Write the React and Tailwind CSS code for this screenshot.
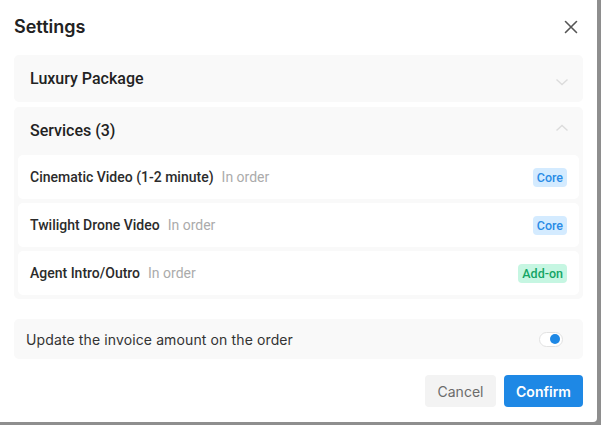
import React from "react";

function Badge({ kind }) {
  if (kind === "core")
    return (
      <span className="h-[19px] px-[4px] rounded-[4px] bg-[#d4ebff] text-[#2a8be6] text-[12.5px] leading-[19px] font-medium">
        Core
      </span>
    );
  return (
    <span className="h-[19px] px-[4px] rounded-[4px] bg-[#c6f6e2] text-[#14a565] text-[12.5px] leading-[19px] font-medium">
      Add-on
    </span>
  );
}

function Item({ name, badge }) {
  return (
    <div className="h-[44px] bg-white rounded-[5px] flex items-center pl-[12px] pr-[12px]">
      <span className="text-[14px] font-medium text-[#2b2b2b]">{name}</span>
      <span className="ml-[8px] text-[14px] text-[#ababab]">In order</span>
      <div className="ml-auto flex">
        <Badge kind={badge} />
      </div>
    </div>
  );
}

export default function App() {
  return (
    <div className="w-[601px] h-[425px] bg-[#8e8e8e] overflow-hidden" style={{ fontFamily: "Roboto, sans-serif" }}>
      <div className="w-[597px] h-[422px] bg-white rounded-br-[4px] px-[14px] flex flex-col">
        <div className="h-[55px] flex items-center justify-between pb-[2px]">
          <span className="text-[18px] font-semibold text-[#222]" style={{ fontFamily: "Inter, sans-serif" }}>
            Settings
          </span>
          <svg width="14" height="14" viewBox="0 0 14 14" className="mr-[5px]">
            <path d="M1.5 1.5 L12.5 12.5 M12.5 1.5 L1.5 12.5" stroke="#555" strokeWidth="1.6" strokeLinecap="round" />
          </svg>
        </div>
        <div className="h-[47px] bg-[#f9f9f9] rounded-[5px] flex items-center pl-[16px] pr-[14px]">
          <span className="text-[16px] font-medium text-[#222]">Luxury Package</span>
          <svg width="14" height="10" viewBox="0 0 14 10" className="ml-auto mt-[6px]">
            <path d="M1.5 2.5 L7 7.5 L12.5 2.5" fill="none" stroke="#dcdcdc" strokeWidth="1.4" />
          </svg>
        </div>
        <div className="mt-[5px] bg-[#f9f9f9] rounded-[5px] px-[4px] pb-[4px]">
          <div className="h-[48px] flex items-center pl-[12px] pr-[10px]">
            <span className="text-[16px] font-medium text-[#222]">Services (3)</span>
            <svg width="14" height="10" viewBox="0 0 14 10" className="ml-auto mb-[6px]">
              <path d="M1.5 7.5 L7 2.5 L12.5 7.5" fill="none" stroke="#dcdcdc" strokeWidth="1.4" />
            </svg>
          </div>
          <div className="flex flex-col gap-[4px]">
            <Item name="Cinematic Video (1-2 minute)" badge="core" />
            <Item name="Twilight Drone Video" badge="core" />
            <Item name="Agent Intro/Outro" badge="addon" />
          </div>
        </div>
        <div
          className="mt-[20px] h-[40px] bg-[#f9f9f9] rounded-[5px] flex items-center pl-[12px] pr-[20px]"
          style={{ fontFamily: "Inter, sans-serif" }}
        >
          <span className="text-[14px] tracking-[0.12px] text-[#333]">Update the invoice amount on the order</span>
          <div className="ml-auto w-[24px] h-[15px] rounded-full border border-[#e2e2e2] bg-white flex items-center justify-end pr-[2px]">
            <div className="w-[10px] h-[10px] rounded-full bg-[#1e88e5]" />
          </div>
        </div>
        <div className="mt-[16px] flex justify-end gap-[8px]" style={{ fontFamily: "Inter, sans-serif" }}>
          <button className="w-[71px] h-[32px] rounded-[4px] bg-[#f3f3f3] text-[14px] text-[#6b6b6b]">Cancel</button>
          <button className="w-[79px] h-[32px] rounded-[4px] bg-[#1e88e5] text-[14px] font-semibold text-white">Confirm</button>
        </div>
      </div>
    </div>
  );
}
